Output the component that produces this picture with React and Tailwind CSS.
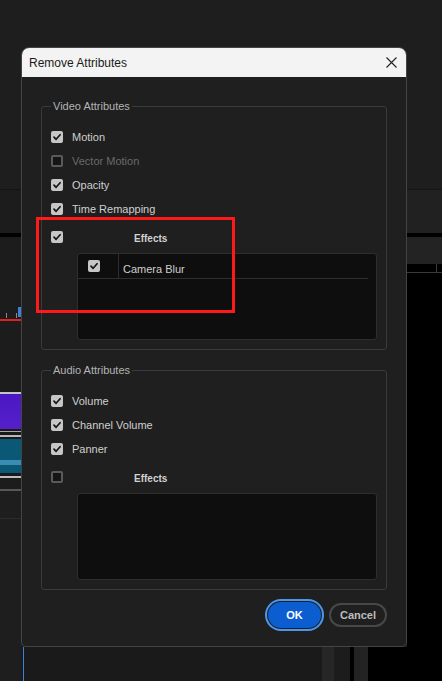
import React from "react";

const Check = ({ checked }) =>
  checked ? (
    <span className="flex h-[12px] w-[12px] shrink-0 items-center justify-center rounded-[2px] bg-[#c6c6c6]">
      <svg width="10" height="10" viewBox="0 0 10 10">
        <path d="M2 5.2 L4.1 7.3 L8.1 2.7" fill="none" stroke="#141414" strokeWidth="1.7" strokeLinecap="round" strokeLinejoin="round" />
      </svg>
    </span>
  ) : (
    <span className="h-[12px] w-[12px] shrink-0 rounded-[2px] border-2 border-[#5a5a5a] bg-[#151515]" />
  );

const Row = ({ checked = true, disabled = false, children }) => (
  <div className="flex h-[24px] items-center gap-[9px]">
    <Check checked={checked} />
    <span className={`text-[11px] leading-[24px] ${disabled ? "text-[#6a6a6a]" : "text-[#cfcfcf]"}`}>{children}</span>
  </div>
);

const EffectsRow = ({ checked }) => (
  <div className="mt-[4px] flex h-[24px] items-center">
    <Check checked={checked} />
    <span className="ml-[71px] pt-[3px] text-[10px] font-bold leading-[24px] text-[#d2d2d2]">Effects</span>
  </div>
);

const EffectsList = ({ children }) => (
  <div className="ml-[26px] mt-[4px] h-[87px] rounded-[3px] border border-[#2e2e2e] bg-[#0e0e0e]">{children}</div>
);

const Group = ({ title, children }) => (
  <fieldset className="rounded-[3px] border border-[#3a3a3a] px-[9px] pb-[9px] pt-[12px]">
    <legend className="px-[2px] text-[11px] leading-[14px] text-[#b4b4b4]">{title}</legend>
    {children}
  </fieldset>
);

const Dialog = () => (
  <div className="flex h-[600px] shrink-0 flex-col overflow-hidden rounded-t-[8px] rounded-b-[5px] border border-[#444444] bg-[#1f1f1f]">
    <div className="flex h-[29px] shrink-0 items-center justify-between bg-[#f3f3f3] pl-[7px] pr-[9px]">
      <span className="text-[12px] text-[#1a1a1a]">Remove Attributes</span>
      <svg width="11" height="11" viewBox="0 0 11 11">
        <path d="M0.5 0.5 L10.5 10.5 M10.5 0.5 L0.5 10.5" stroke="#222" strokeWidth="1.1" />
      </svg>
    </div>
    <div className="flex flex-1 flex-col px-[19px] pt-[22px]">
      <Group title="Video Attributes">
        <Row>Motion</Row>
        <Row checked={false} disabled>
          Vector Motion
        </Row>
        <Row>Opacity</Row>
        <Row>Time Remapping</Row>
        <EffectsRow checked />
        <EffectsList>
          <div className="flex h-[25px] w-[290px] border-b border-[#2e2e2e]">
            <div className="flex w-[41px] items-center border-r border-[#2e2e2e] pl-[10px]">
              <Check checked />
            </div>
            <span className="pl-[4px] pt-[2px] text-[11px] leading-[27px] text-[#cfcfcf]">Camera Blur</span>
          </div>
        </EffectsList>
      </Group>
      <div className="mt-[13px]">
        <Group title="Audio Attributes">
          <Row>Volume</Row>
          <Row>Channel Volume</Row>
          <Row>Panner</Row>
          <EffectsRow checked={false} />
          <EffectsList />
        </Group>
      </div>
      <div className="mt-[12px] flex items-center justify-end gap-[8px]">
        <button className="h-[26px] w-[53px] rounded-full bg-[#0c5ed0] text-[11px] font-bold text-white ring-2 ring-[#4a98ee] ring-offset-1 ring-offset-[#1f1f1f]">
          OK
        </button>
        <button className="h-[24px] w-[58px] rounded-full border-2 border-[#484848] text-[11px] font-bold text-[#bdbdbd]">
          Cancel
        </button>
      </div>
    </div>
  </div>
);

const LeftCol = () => (
  <div className="flex w-[21px] shrink-0 flex-col bg-[#1e1e1e]">
    <div className="h-[189px]" />
    <div className="h-[1px] bg-[#141414]" />
    <div className="h-[43px] bg-[#1c1c1c]" />
    <div className="h-[4px] bg-black" />
    <div className="h-[70px] bg-[#1c1c1c]" />
    <div className="flex h-[12px] items-end bg-[#1c1c1c]">
      <span className="mb-[1px] ml-[6px] h-[5px] w-px bg-[#8a8a8a]" />
      <span className="mb-[1px] ml-[9px] h-[5px] w-px bg-[#8a8a8a]" />
      <span className="ml-[1px] h-[10px] w-[3px] self-start bg-[#3f7fd8]" />
    </div>
    <div className="h-[2px] bg-[#e3201c]" />
    <div className="h-[71px] bg-[#1c1c1c]" />
    <div className="h-[2px] bg-[#c4c4c4]" />
    <div className="h-[35px] bg-gradient-to-b from-[#4a17c2] to-[#5520cc]" />
    <div className="h-[2px] bg-[#1a1a1a]" />
    <div className="h-[1px] bg-[#a8a8a8]" />
    <div className="h-[3px] bg-[#1a1a1a]" />
    <div className="h-[2px] bg-[#b8b8b8]" />
    <div className="h-[2px] bg-[#1a1a1a]" />
    <div className="h-[21px] bg-[#0b5876]" />
    <div className="h-[5px] bg-[#3a8db2]" />
    <div className="h-[8px] bg-[#0b5876]" />
    <div className="h-[3px] bg-[#1a1a1a]" />
    <div className="h-[2px] bg-[#bdbdbd]" />
    <div className="h-[11px] bg-[#1c1c1c]" />
    <div className="h-[2px] bg-[#575757]" />
    <div className="h-[27px]" />
    <div className="h-[1px] bg-[#2c2c2c]" />
    <div className="flex-1" />
  </div>
);

const RightCol = () => (
  <div className="flex w-[35px] shrink-0 flex-col bg-black">
    <div className="h-[189px] bg-[#1e1e1e]" />
    <div className="h-[1px] bg-[#141414]" />
    <div className="h-[43px] bg-[#212121]" />
    <div className="h-[4px] bg-black" />
    <div className="h-[27px] bg-[#232323]" />
    <div className="flex h-[8px] bg-black">
      <span className="ml-[29px] h-full w-px bg-[#3a3a3a]" />
    </div>
    <div className="h-[1px] bg-[#3a3a3a]" />
    <div className="flex-1" />
  </div>
);

export default function App() {
  return (
    <div className="relative flex h-[681px] w-[442px] overflow-hidden bg-[#1e1e1e] font-['Liberation_Sans',Arial,sans-serif]">
      <LeftCol />
      <div className="flex w-[386px] shrink-0 flex-col">
        <div className="h-[47px] shrink-0" />
        <Dialog />
        <div className="flex h-[34px] shrink-0 bg-[#1a1a1a]">
          <span className="ml-[2px] h-full w-px bg-[#3b82d6]" />
          <span className="ml-[298px] h-full w-[12px] bg-[#262626]" />
          <span className="h-full w-[16px] bg-[#1c1c1c]" />
          <span className="h-full w-[4px] bg-black" />
          <span className="h-full w-[14px] bg-[#232323]" />
          <span className="h-full flex-1 bg-black" />
        </div>
      </div>
      <RightCol />
      <div className="pointer-events-none absolute left-[36px] top-[217px] h-[96px] w-[199px] border-[3px] border-[#ff1a1a]" />
    </div>
  );
}
